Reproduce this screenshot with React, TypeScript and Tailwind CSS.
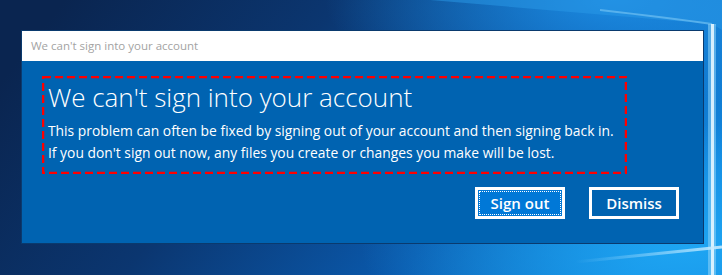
import React from 'react';

const Wallpaper: React.FC = () => (
  <svg className="absolute inset-0" width="722" height="275" viewBox="0 0 722 275">
    <defs>
      <linearGradient id="bg" x1="0" y1="0.3" x2="1" y2="0.6">
        <stop offset="0" stopColor="#0a2550" />
        <stop offset="0.35" stopColor="#0b3670" />
        <stop offset="0.7" stopColor="#0a5aad" />
        <stop offset="1" stopColor="#1288e0" />
      </linearGradient>
      <radialGradient id="glow" cx="0.95" cy="0.9" r="0.45">
        <stop offset="0" stopColor="#1fa8f4" stopOpacity="0.9" />
        <stop offset="1" stopColor="#1fa8f4" stopOpacity="0" />
      </radialGradient>
      <radialGradient id="glowTop" cx="0.85" cy="0" r="0.4">
        <stop offset="0" stopColor="#1d8fe6" stopOpacity="0.9" />
        <stop offset="1" stopColor="#1d8fe6" stopOpacity="0" />
      </radialGradient>
      <linearGradient id="beam" x1="0" y1="0" x2="1" y2="0">
        <stop offset="0" stopColor="#9fdcff" stopOpacity="0" />
        <stop offset="1" stopColor="#c8ecff" stopOpacity="0.9" />
      </linearGradient>
    </defs>
    <rect width="722" height="275" fill="url(#bg)" />
    <rect width="722" height="275" fill="url(#glow)" />
    <rect width="722" height="275" fill="url(#glowTop)" />
    <path d="M430 0 L722 0 L722 30 L712 24 Z" fill="#2a9ae8" opacity="0.5" />
    <path d="M600 10 Q670 18 712 24" stroke="#7cc8f5" strokeWidth="2" fill="none" opacity="0.6" />
    <rect x="708" y="24" width="8" height="251" fill="#8fd3f8" opacity="0.55" />
    <rect x="711" y="24" width="3" height="251" fill="#e6f6ff" opacity="0.9" />
    <path d="M575 262 L722 247" stroke="url(#beam)" strokeWidth="3" />
  </svg>
);

export default function App() {
  return (
    <div className="relative w-[722px] h-[275px] overflow-hidden" style={{ fontFamily: '"Open Sans", "Noto Sans", sans-serif' }}>
      <Wallpaper />
      <div className="relative pt-[31px] pl-[22px]">
        <div className="w-[681px] h-[212px] bg-[#0063b1] flex flex-col shadow-[0_0_0_1px_#0a3a6e]">
          <div className="h-[30px] bg-white flex items-center px-[9px] text-[11.5px] text-[#a3a3a3]">
            We can't sign into your account
          </div>
          <div className="pt-[15px] pl-[20px]">
            <div className="relative w-[585px] h-[98px] pl-[6px] text-white">
              {/* red dashed highlight */}
              <svg className="absolute inset-0" width="585" height="98">
                <rect x="1" y="1" width="583" height="96" fill="none" stroke="#ff0000" strokeWidth="2.5" strokeDasharray="8 4" />
              </svg>
              <div className="text-[26px] font-light leading-[34px] pt-[4px]">We can't sign into your account</div>
              <div className="text-[13.85px] leading-[22px] mt-[6px]">
                This problem can often be fixed by signing out of your account and then signing back in.
                <br />
                If you don't sign out now, any files you create or changes you make will be lost.
              </div>
            </div>
          </div>
          <div className="flex justify-end gap-[24px] pr-[24px] mt-[13px]">
            <button className="w-[90px] h-[32px] border-[3px] border-white bg-[#0078d7] p-[1px]">
              <span className="flex w-full h-full items-center justify-center border border-dotted border-white text-white text-[15px] font-semibold">
                Sign out
              </span>
            </button>
            <button className="w-[90px] h-[32px] border-[3px] border-white flex items-center justify-center text-white text-[15px] font-semibold">
              Dismiss
            </button>
          </div>
        </div>
      </div>
    </div>
  );
}
